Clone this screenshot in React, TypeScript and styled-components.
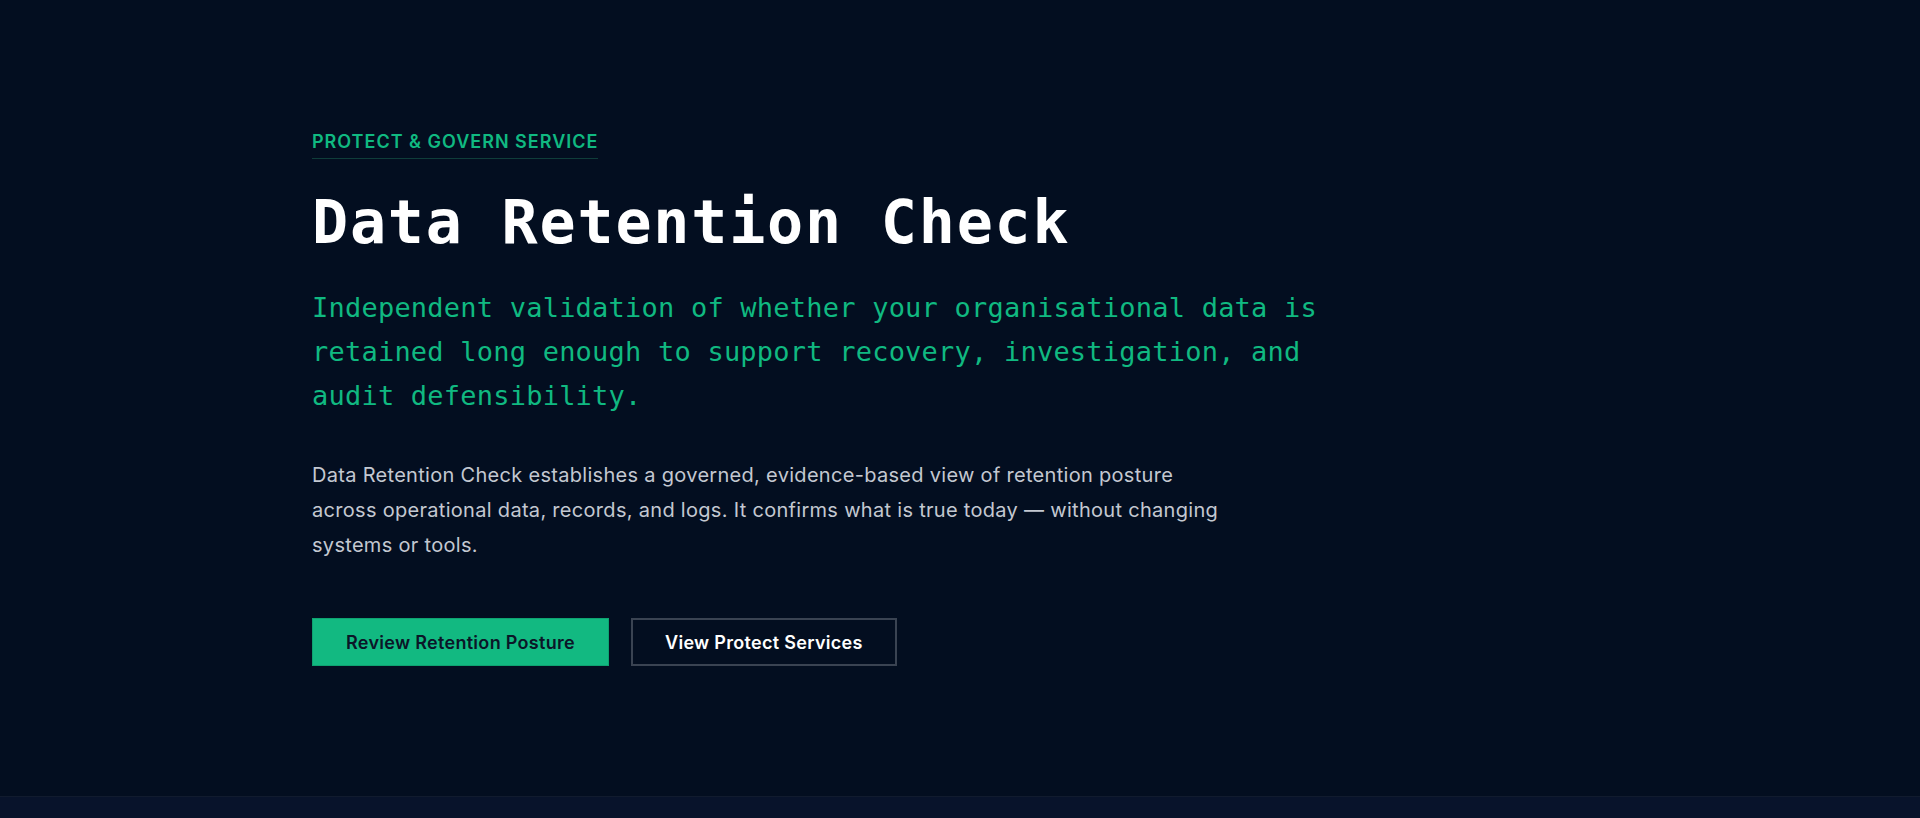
import * as React from 'react';
import styled, { createGlobalStyle } from 'styled-components';

const GlobalStyle = createGlobalStyle`
  html, body {
    margin: 0;
    padding: 0;
    background: #030e20;
  }
  body {
    font-family: Inter, 'Noto Sans', sans-serif;
    -webkit-font-smoothing: antialiased;
  }
  * {
    box-sizing: border-box;
  }
`;

const Hero = styled.section`
  background: #030e20;
  min-height: 796px;
  padding: 128px 0 80px;
`;

const Container = styled.div`
  max-width: 1296px;
  margin: 0 auto;
  display: flex;
  flex-direction: column;
  align-items: flex-start;
`;

const Eyebrow = styled.span`
  font-family: Inter, sans-serif;
  font-weight: 600;
  font-size: 18px;
  line-height: 27px;
  letter-spacing: 1px;
  color: #10b981;
  text-transform: uppercase;
  padding-bottom: 3px;
  border-bottom: 1px solid #0f3d3a;
`;

const Title = styled.h1`
  margin: 29px 0 0;
  font-family: 'DejaVu Sans Mono', 'Liberation Mono', monospace;
  font-weight: 700;
  font-size: 60px;
  line-height: 69px;
  letter-spacing: 1.8px;
  color: #ffffff;
`;

const Lead = styled.p`
  margin: 29px 0 0;
  max-width: 1040px;
  font-family: 'DejaVu Sans Mono', 'Liberation Mono', monospace;
  font-weight: 400;
  font-size: 27px;
  line-height: 44px;
  letter-spacing: 0.22px;
  color: #10b981;
`;

const Body = styled.p`
  margin: 40px 0 0;
  max-width: 910px;
  font-family: Inter, sans-serif;
  font-size: 20px;
  line-height: 35px;
  letter-spacing: 0.3px;
  color: #c3c8d1;
`;

const Actions = styled.div`
  margin-top: 55px;
  display: flex;
  gap: 22px;
`;

const Button = styled.a<{ $variant?: 'primary' | 'ghost' }>`
  display: inline-flex;
  align-items: center;
  justify-content: center;
  height: 48px;
  padding: 0 ${p => (p.$variant === 'ghost' ? '32px' : '33px')};
  font-family: Inter, sans-serif;
  font-weight: 600;
  font-size: 18px;
  letter-spacing: 0.3px;
  text-decoration: none;
  cursor: pointer;
  color: ${p => (p.$variant === 'ghost' ? '#ffffff' : '#0b1628')};
  background: ${p => (p.$variant === 'ghost' ? 'transparent' : '#12b981')};
  border: ${p => (p.$variant === 'ghost' ? '2px solid #3a4352' : '1px solid #0ea371')};
`;

const NextSection = styled.section`
  background: #08132b;
  border-top: 1px solid #111b2e;
  height: 22px;
`;

const App = () => {
  return (
    <>
      <GlobalStyle />
      <Hero>
        <Container>
          <Eyebrow>Protect &amp; Govern Service</Eyebrow>
          <Title>Data Retention Check</Title>
          <Lead>
            Independent validation of whether your organisational data is retained long enough to
            support recovery, investigation, and audit defensibility.
          </Lead>
          <Body>
            Data Retention Check establishes a governed, evidence-based view of retention posture
            across operational data, records, and logs. It confirms what is true today — without
            changing systems or tools.
          </Body>
          <Actions>
            <Button href="#review">Review Retention Posture</Button>
            <Button href="#services" $variant="ghost">View Protect Services</Button>
          </Actions>
        </Container>
      </Hero>
      <NextSection />
    </>
  );
};

export default App;
